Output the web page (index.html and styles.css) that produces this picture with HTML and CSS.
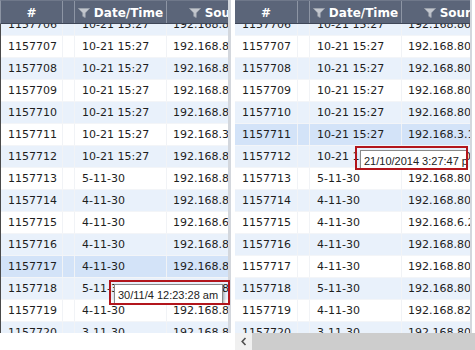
FILE: index.html
```html
<!DOCTYPE html>
<html>
<head>
<meta charset="utf-8">
<link rel="stylesheet" href="styles.css">
</head>
<body>
<div class="screen">
  <section class="grid grid-left">
    <div class="head">
      <div class="hc">#</div>
      <div class="hc"></div>
      <div class="hc"><svg class="funnel" viewBox="0 0 12 10"><path d="M0.5 0.5H11.5L7.2 5V9.5L4.8 8.3V5Z"/></svg>Date/Time</div>
      <div class="hc"><svg class="funnel" viewBox="0 0 12 10"><path d="M0.5 0.5H11.5L7.2 5V9.5L4.8 8.3V5Z"/></svg>Source</div>
    </div>
    <div class="body">
      <div class="rows">
        <div class="row alt"><div class="c">1157706</div><div class="c"></div><div class="c">10-21 15:27</div><div class="c">192.168.80.21</div></div>
        <div class="row"><div class="c">1157707</div><div class="c"></div><div class="c">10-21 15:27</div><div class="c">192.168.80.14</div></div>
        <div class="row alt"><div class="c">1157708</div><div class="c"></div><div class="c">10-21 15:27</div><div class="c">192.168.80.11</div></div>
        <div class="row"><div class="c">1157709</div><div class="c"></div><div class="c">10-21 15:27</div><div class="c">192.168.80.17</div></div>
        <div class="row alt"><div class="c">1157710</div><div class="c"></div><div class="c">10-21 15:27</div><div class="c">192.168.80.12</div></div>
        <div class="row"><div class="c">1157711</div><div class="c"></div><div class="c">10-21 15:27</div><div class="c">192.168.3.15</div></div>
        <div class="row alt"><div class="c">1157712</div><div class="c"></div><div class="c">10-21 15:27</div><div class="c">192.168.80.2</div></div>
        <div class="row"><div class="c">1157713</div><div class="c"></div><div class="c">5-11-30</div><div class="c">192.168.80.6</div></div>
        <div class="row alt"><div class="c">1157714</div><div class="c"></div><div class="c">4-11-30</div><div class="c">192.168.80.9</div></div>
        <div class="row"><div class="c">1157715</div><div class="c"></div><div class="c">4-11-30</div><div class="c">192.168.6.20</div></div>
        <div class="row alt"><div class="c">1157716</div><div class="c"></div><div class="c">4-11-30</div><div class="c">192.168.80.3</div></div>
        <div class="row sel"><div class="c">1157717</div><div class="c"></div><div class="c">4-11-30</div><div class="c">192.168.80.5</div></div>
        <div class="row alt"><div class="c">1157718</div><div class="c"></div><div class="c">5-11-30</div><div class="c">192.168.80.7</div></div>
        <div class="row"><div class="c">1157719</div><div class="c"></div><div class="c">4-11-30</div><div class="c">192.168.82.4</div></div>
        <div class="row alt"><div class="c">1157720</div><div class="c"></div><div class="c">3-11-30</div><div class="c">192.168.80.8</div></div>
      </div>
    </div>
  </section>

  <div class="rightcol">
    <section class="grid grid-right">
      <div class="head">
        <div class="hc">#</div>
        <div class="hc"></div>
        <div class="hc"><svg class="funnel" viewBox="0 0 12 10"><path d="M0.5 0.5H11.5L7.2 5V9.5L4.8 8.3V5Z"/></svg>Date/Time</div>
        <div class="hc"><svg class="funnel" viewBox="0 0 12 10"><path d="M0.5 0.5H11.5L7.2 5V9.5L4.8 8.3V5Z"/></svg>Source</div>
      </div>
      <div class="body">
        <div class="rows">
          <div class="row alt"><div class="c">1157706</div><div class="c"></div><div class="c">10-21 15:27</div><div class="c">192.168.80.21</div></div>
          <div class="row"><div class="c">1157707</div><div class="c"></div><div class="c">10-21 15:27</div><div class="c">192.168.80.14</div></div>
          <div class="row alt"><div class="c">1157708</div><div class="c"></div><div class="c">10-21 15:27</div><div class="c">192.168.80.11</div></div>
          <div class="row"><div class="c">1157709</div><div class="c"></div><div class="c">10-21 15:27</div><div class="c">192.168.80.17</div></div>
          <div class="row alt"><div class="c">1157710</div><div class="c"></div><div class="c">10-21 15:27</div><div class="c">192.168.80.12</div></div>
          <div class="row sel"><div class="c">1157711</div><div class="c"></div><div class="c">10-21 15:27</div><div class="c">192.168.3.15</div></div>
          <div class="row alt"><div class="c">1157712</div><div class="c"></div><div class="c">10-21 15:27</div><div class="c">192.168.80.2</div></div>
          <div class="row"><div class="c">1157713</div><div class="c"></div><div class="c">5-11-30</div><div class="c">192.168.80.6</div></div>
          <div class="row alt"><div class="c">1157714</div><div class="c"></div><div class="c">4-11-30</div><div class="c">192.168.80.9</div></div>
          <div class="row"><div class="c">1157715</div><div class="c"></div><div class="c">4-11-30</div><div class="c">192.168.6.20</div></div>
          <div class="row alt"><div class="c">1157716</div><div class="c"></div><div class="c">4-11-30</div><div class="c">192.168.80.3</div></div>
          <div class="row"><div class="c">1157717</div><div class="c"></div><div class="c">4-11-30</div><div class="c">192.168.80.5</div></div>
          <div class="row alt"><div class="c">1157718</div><div class="c"></div><div class="c">5-11-30</div><div class="c">192.168.80.7</div></div>
          <div class="row"><div class="c">1157719</div><div class="c"></div><div class="c">4-11-30</div><div class="c">192.168.82.4</div></div>
          <div class="row alt"><div class="c">1157720</div><div class="c"></div><div class="c">3-11-30</div><div class="c">192.168.80.8</div></div>
        </div>
      </div>
    </section>
    <div class="hscroll">
      <div class="hs-btn"><svg viewBox="0 0 6 9" class="chev"><path d="M4.5 1L1.2 4.5L4.5 8"/></svg></div>
      <div class="hs-thumb"></div>
    </div>
  </div>

  <div class="frame frame-left"><div class="tip">30/11/4 12:23:28 am</div></div>
  <div class="frame frame-right"><div class="tip">21/10/2014 3:27:47 pm</div></div>
</div>
</body>
</html>
```

FILE: styles.css
```css
* { box-sizing: border-box; }
html, body { margin: 0; padding: 0; background: #fff; }
.screen {
  position: relative;
  width: 475px;
  height: 350px;
  display: flex;
  gap: 4px;
  overflow: hidden;
  font-family: "DejaVu Sans", Verdana, sans-serif;
  color: #1e1e1e;
}
.grid {
  height: 333px;
  overflow: hidden;
  display: flex;
  flex-direction: column;
  --c1: 63px;
}
.grid-left {
  width: 231px;
  flex: 0 0 231px;
  border-right: 3px solid #d3d7dd;
  --c1: 62px;
}
.grid-left .body { border-left: 1px solid #4a4a4a; }
.grid-left .head { border-left: 1px solid #8c94a3; }
.rightcol {
  width: 240px;
  flex: 0 0 240px;
  display: flex;
  flex-direction: column;
}
.grid-right {
  width: 237px;
  border-right: 2px solid #d3d7dd;
}
.head, .row {
  display: grid;
  grid-template-columns: var(--c1) 12px 92px 107px;
}
.head {
  height: 24px;
  flex: 0 0 24px;
  background: #5b6579;
  border-bottom: 1px solid #3e4657;
  border-top: 1px solid #6f788a;
}
.hc {
  display: flex;
  align-items: center;
  justify-content: center;
  gap: 4px;
  padding-top: 2px;
  color: #fff;
  font-weight: bold;
  font-size: 12px;
  border-right: 1px solid #8d95a4;
  white-space: nowrap;
  overflow: hidden;
}
.funnel {
  width: 12px;
  height: 10px;
  flex: 0 0 12px;
  fill: #c3c7ce;
  stroke: #9ea4ae;
  stroke-width: 0.8;
}
.body {
  flex: 1;
  min-height: 0;
  overflow: hidden;
}
.rows { margin-top: -10px; }
.row {
  height: 22px;
  border-bottom: 1px solid #f3f5f8;
  background: #fff;
}
.row.alt { background: #e9f1fb; }
.row.sel { background: #d3e3f8; }
.c {
  font-size: 11px;
  line-height: 21px;
  padding-left: 7px;
  white-space: nowrap;
  overflow: hidden;
  border-right: 1px solid #f1f3f6;
}
.c:nth-child(4) { padding-left: 6px; }
.hscroll {
  height: 17px;
  display: flex;
  background: #f0f0f0;
}
.hs-btn {
  width: 17px;
  flex: 0 0 17px;
  display: flex;
  align-items: center;
  justify-content: center;
}
.chev {
  width: 6px;
  height: 9px;
  fill: none;
  stroke: #505050;
  stroke-width: 1.6;
}
.hs-thumb {
  flex: 1;
  background: #cdcdcd;
}
.frame {
  position: absolute;
  border: 2px solid #b2151c;
  overflow: hidden;
  padding: 2px 0 0 3px;
}
.frame-left { left: 109px; top: 280px; width: 121px; height: 25px; }
.frame-right { left: 355px; top: 146px; width: 113px; height: 24px; }
.tip {
  background: #fff;
  border: 1px solid #8a8a8a;
  box-shadow: 1px 2px 3px rgba(0,0,0,0.35);
  font-family: "Liberation Sans", Arial, sans-serif;
  font-size: 11px;
  line-height: 17px;
  padding: 2px 4px 0 3px;
  white-space: nowrap;
  width: max-content;
  color: #222;
}
```
